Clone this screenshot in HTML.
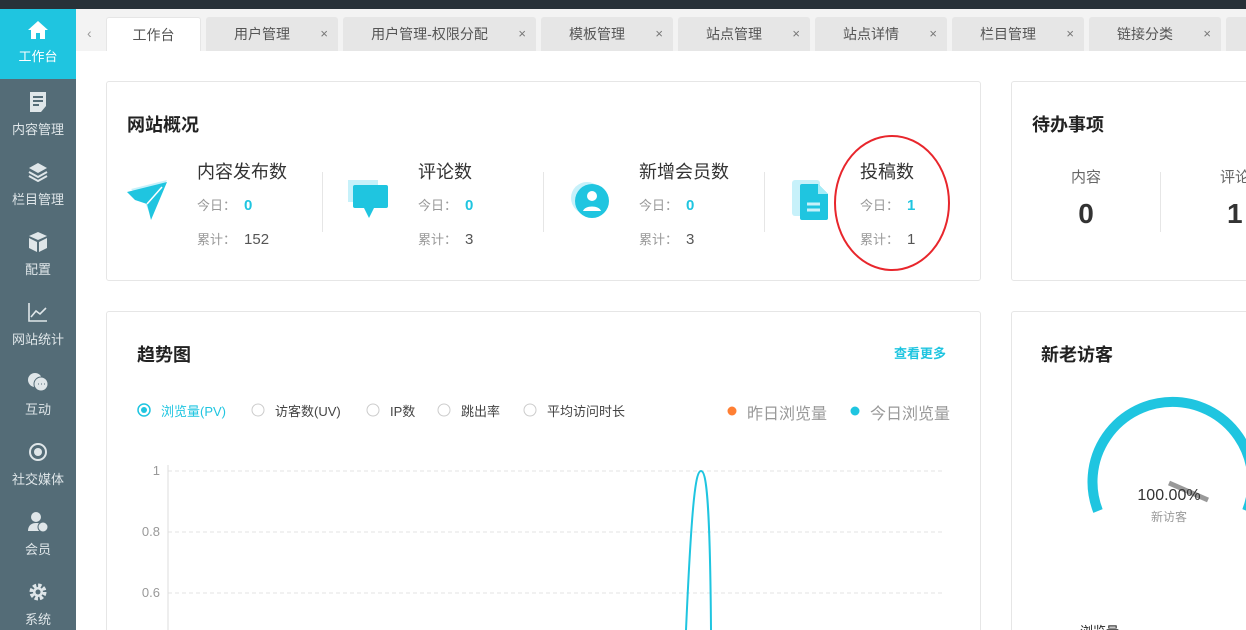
<!DOCTYPE html>
<html><head><meta charset="utf-8"><style>
*{margin:0;padding:0;box-sizing:border-box}
html,body{width:1246px;height:630px;overflow:hidden}
body{background:#fff;font-family:"Liberation Sans","Noto Sans CJK SC",sans-serif;position:relative;color:#333}
.abs{position:absolute;white-space:nowrap}
.top{left:0;top:0;width:1246px;height:9px;background:#283138}
.side{left:0;top:9px;width:76px;height:621px;background:#546c77}
.act{left:0;top:9px;width:76px;height:70px;background:#1fc5e0}
.si{position:absolute;left:0;width:76px;text-align:center;color:#dfe6e9;font-size:13px;white-space:nowrap}
.si svg{display:block;margin:0 auto 7px}
.tabbar{left:76px;top:9px;width:1170px;height:42px;background:#f3f3f3}
.tab{position:absolute;top:17px;height:34px;background:#e6e6e6;border-radius:3px 3px 0 0;font-size:14px;color:#555;line-height:34px;white-space:nowrap}
.tab span.t{position:absolute;left:0;right:20px;text-align:center}
.tab span.x{position:absolute;right:10px;font-size:13px;color:#777}
.card{position:absolute;border:1px solid #e6e6e6;border-radius:3px;background:#fff}
.h{position:absolute;font-size:18px;font-weight:bold;color:#222;white-space:nowrap}
.st{position:absolute;font-size:18px;color:#333;white-space:nowrap}
.sm{position:absolute;font-size:13px;color:#999;white-space:nowrap}
.sm b{color:#1fc5e0;font-size:15px;margin-left:8px}
.sm i{font-style:normal;color:#555;font-size:15px;margin-left:8px}
.vd{position:absolute;width:1px;background:#e6e6e6}
</style></head><body>
<div class="abs top"></div>
<div class="abs side"></div>
<div class="abs act"></div>
<div class="si" style="top:21px;color:#fff"><svg width="20" height="18" viewBox="0 0 20 18"><path d="M10 0L0 9h3v9h5v-6h4v6h5V9h3z" fill="#fff"/></svg>工作台</div>
<div class="si" style="top:92px"><svg width="18" height="20" viewBox="0 0 18 20"><path d="M1 0h16v14l-5 6H1z" fill="#dfe6e9"/><path d="M4 5h10M4 9h10M4 13h6" stroke="#546c77" stroke-width="2"/></svg>内容管理</div>
<div class="si" style="top:162px"><svg width="20" height="20" viewBox="0 0 20 20"><path d="M10 1l9 5-9 5-9-5z" fill="#dfe6e9"/><path d="M1 10l9 5 9-5M1 14l9 5 9-5" stroke="#dfe6e9" stroke-width="2" fill="none"/></svg>栏目管理</div>
<div class="si" style="top:232px"><svg width="20" height="20" viewBox="0 0 20 20"><path d="M10 0l9 4-9 4-9-4zM1 6l8 4v10l-8-4zM19 6l-8 4v10l8-4z" fill="#dfe6e9"/></svg>配置</div>
<div class="si" style="top:302px"><svg width="20" height="20" viewBox="0 0 20 20"><path d="M1 1v18h18M3 15l5-6 4 3 6-6" stroke="#dfe6e9" stroke-width="1.6" fill="none"/></svg>网站统计</div>
<div class="si" style="top:372px"><svg width="22" height="20" viewBox="0 0 22 20"><circle cx="8" cy="8" r="7" fill="#dfe6e9"/><circle cx="14" cy="12" r="7" fill="#dfe6e9" stroke="#546c77"/><path d="M11 12h1M14 12h1M17 12h1" stroke="#546c77"/></svg>互动</div>
<div class="si" style="top:442px"><svg width="20" height="20" viewBox="0 0 20 20"><circle cx="10" cy="10" r="8" stroke="#dfe6e9" stroke-width="2" fill="none"/><circle cx="10" cy="10" r="4" fill="#dfe6e9"/></svg>社交媒体</div>
<div class="si" style="top:512px"><svg width="20" height="20" viewBox="0 0 20 20"><circle cx="8" cy="5" r="5" fill="#dfe6e9"/><path d="M0 19c0-6 4-8 8-8s6 1 7 3v5z" fill="#dfe6e9"/><circle cx="15" cy="15" r="5" fill="#dfe6e9" stroke="#546c77"/></svg>会员</div>
<div class="si" style="top:582px"><svg width="20" height="20" viewBox="0 0 20 20"><circle cx="10" cy="10" r="6" stroke="#dfe6e9" stroke-width="5" stroke-dasharray="3 1.7" fill="none"/><circle cx="10" cy="10" r="5" fill="#dfe6e9"/><circle cx="10" cy="10" r="2.5" fill="#546c77"/></svg>系统</div>

<div class="abs tabbar"></div>
<div class="abs" style="left:87px;top:25px;color:#999;font-size:14px">‹</div>
<div class="tab" style="left:106px;width:95px;background:#fff;border:1px solid #e6e6e6;border-bottom:none"><span class="t" style="right:0">工作台</span></div>
<div class="tab" style="left:206px;width:132px"><span class="t">用户管理</span><span class="x">×</span></div>
<div class="tab" style="left:343px;width:193px"><span class="t">用户管理-权限分配</span><span class="x">×</span></div>
<div class="tab" style="left:541px;width:132px"><span class="t">模板管理</span><span class="x">×</span></div>
<div class="tab" style="left:678px;width:132px"><span class="t">站点管理</span><span class="x">×</span></div>
<div class="tab" style="left:815px;width:132px"><span class="t">站点详情</span><span class="x">×</span></div>
<div class="tab" style="left:952px;width:132px"><span class="t">栏目管理</span><span class="x">×</span></div>
<div class="tab" style="left:1089px;width:132px"><span class="t">链接分类</span><span class="x">×</span></div>
<div class="tab" style="left:1226px;width:40px"></div>

<div class="card" style="left:106px;top:81px;width:875px;height:200px"></div>
<div class="h" style="left:127px;top:111px">网站概况</div>
<svg class="abs" style="left:127px;top:180px" width="42" height="40" viewBox="0 0 42 40"><path d="M4 9L40 0 22 32 18 22z" fill="#c7f1fa"/><path d="M0 12L40 2 24 40 20 24 8 20z" fill="#1fc5e0"/><path d="M20 24l15-17" stroke="#fff" stroke-width="1.5"/></svg>
<svg class="abs" style="left:348px;top:180px" width="42" height="38" viewBox="0 0 42 38"><rect x="0" y="0" width="30" height="22" fill="#c7f1fa"/><rect x="5" y="5" width="35" height="23" rx="2" fill="#1fc5e0"/><path d="M16 28l5 10 5-10z" fill="#1fc5e0"/></svg>
<svg class="abs" style="left:569px;top:180px" width="42" height="40" viewBox="0 0 42 40"><circle cx="18" cy="18" r="16" fill="#c7f1fa"/><circle cx="23" cy="21" r="17" fill="#1fc5e0"/><circle cx="23" cy="16" r="5" fill="#fff"/><path d="M14 31c2-6 16-6 18 0z" fill="#fff"/></svg>
<svg class="abs" style="left:792px;top:180px" width="38" height="42" viewBox="0 0 38 42"><rect x="0" y="0" width="28" height="36" rx="3" fill="#c7f1fa"/><path d="M10 4h16l10 10v24a2 2 0 0 1-2 2H10a2 2 0 0 1-2-2V6a2 2 0 0 1 2-2z" fill="#1fc5e0"/><path d="M26 4v10h10z" fill="#a6ecf7"/><path d="M15 24h13M15 30h13" stroke="#c7f1fa" stroke-width="3"/></svg>

<div class="st" style="left:197px;top:158px">内容发布数</div>
<div class="sm" style="left:197px;top:195px">今日：<b>0</b></div>
<div class="sm" style="left:197px;top:229px">累计：<i>152</i></div>
<div class="vd" style="left:322px;top:172px;height:60px"></div>
<div class="st" style="left:418px;top:158px">评论数</div>
<div class="sm" style="left:418px;top:195px">今日：<b>0</b></div>
<div class="sm" style="left:418px;top:229px">累计：<i>3</i></div>
<div class="vd" style="left:543px;top:172px;height:60px"></div>
<div class="st" style="left:639px;top:158px">新增会员数</div>
<div class="sm" style="left:639px;top:195px">今日：<b>0</b></div>
<div class="sm" style="left:639px;top:229px">累计：<i>3</i></div>
<div class="vd" style="left:764px;top:172px;height:60px"></div>
<div class="st" style="left:860px;top:158px">投稿数</div>
<div class="sm" style="left:860px;top:195px">今日：<b>1</b></div>
<div class="sm" style="left:860px;top:229px">累计：<i>1</i></div>
<svg class="abs" style="left:830px;top:132px" width="125" height="142"><ellipse cx="62" cy="71" rx="57" ry="67" stroke="#e8262c" stroke-width="2" fill="none"/></svg>

<div class="card" style="left:1011px;top:81px;width:260px;height:200px"></div>
<div class="h" style="left:1032px;top:111px">待办事项</div>
<div class="abs" style="left:1060px;top:166px;width:52px;text-align:center;font-size:15px;color:#666">内容</div>
<div class="abs" style="left:1060px;top:198px;width:52px;text-align:center;font-size:28px;font-weight:bold;color:#333">0</div>
<div class="vd" style="left:1160px;top:172px;height:60px"></div>
<div class="abs" style="left:1220px;top:166px;font-size:15px;color:#666">评论</div>
<div class="abs" style="left:1227px;top:198px;font-size:28px;font-weight:bold;color:#333">1</div>

<div class="card" style="left:106px;top:311px;width:875px;height:340px"></div>
<div class="h" style="left:137px;top:341px">趋势图</div>
<div class="abs" style="left:894px;top:343px;font-size:13px;font-weight:bold;color:#1fc5e0">查看更多</div>
<svg class="abs" style="left:136px;top:402px" width="520" height="18">
<circle cx="8" cy="8" r="6" fill="#fff" stroke="#1fc5e0" stroke-width="1.5"/><circle cx="8" cy="8" r="3" fill="#1fc5e0"/>
<circle cx="122" cy="8" r="6" fill="none" stroke="#ccc"/><circle cx="237" cy="8" r="6" fill="none" stroke="#ccc"/><circle cx="308" cy="8" r="6" fill="none" stroke="#ccc"/><circle cx="394" cy="8" r="6" fill="none" stroke="#ccc"/></svg>
<div class="abs" style="left:161px;top:401px;font-size:13px;color:#1fc5e0">浏览量(PV)</div>
<div class="abs" style="left:275px;top:401px;font-size:13px;color:#444">访客数(UV)</div>
<div class="abs" style="left:390px;top:401px;font-size:13px;color:#444">IP数</div>
<div class="abs" style="left:461px;top:401px;font-size:13px;color:#444">跳出率</div>
<div class="abs" style="left:547px;top:401px;font-size:13px;color:#444">平均访问时长</div>
<svg class="abs" style="left:726px;top:405px" width="140" height="12"><circle cx="6" cy="6" r="4.5" fill="#ff7f33"/><circle cx="129" cy="6" r="4.5" fill="#1fc5e0"/></svg>
<div class="abs" style="left:747px;top:400px;font-size:16px;color:#999">昨日浏览量</div>
<div class="abs" style="left:870px;top:400px;font-size:16px;color:#999">今日浏览量</div>
<svg class="abs" style="left:130px;top:455px" width="830" height="175">
<g stroke="#e3e3e3" stroke-dasharray="4 3"><path d="M38 16H815M38 77H815M38 138H815"/></g>
<path d="M38 10V175" stroke="#ddd"/>
<g font-size="13" fill="#999" font-family="Liberation Sans" text-anchor="end"><text x="30" y="20">1</text><text x="30" y="81">0.8</text><text x="30" y="142">0.6</text></g>
<path d="M556 175C562 40 566 16 571 16S580 40 581 175" stroke="#1fc5e0" stroke-width="2" fill="none"/>
</svg>

<div class="card" style="left:1011px;top:311px;width:260px;height:340px"></div>
<div class="h" style="left:1041px;top:341px">新老访客</div>
<svg class="abs" style="left:1011px;top:311px" width="235" height="319">
<path d="M87 200A80 80 0 1 1 236 200" stroke="#1fc5e0" stroke-width="10" fill="none"/>
<path d="M158 172L197 189" stroke="#999" stroke-width="5"/>
</svg>
<div class="abs" style="left:1119px;top:487px;width:100px;text-align:center;font-size:16px;color:#333">100.00%</div>
<div class="abs" style="left:1119px;top:508px;width:100px;text-align:center;font-size:12px;color:#999">新访客</div>
<div class="abs" style="left:1080px;top:621px;font-size:13px;color:#222">浏览量</div>
</body></html>
